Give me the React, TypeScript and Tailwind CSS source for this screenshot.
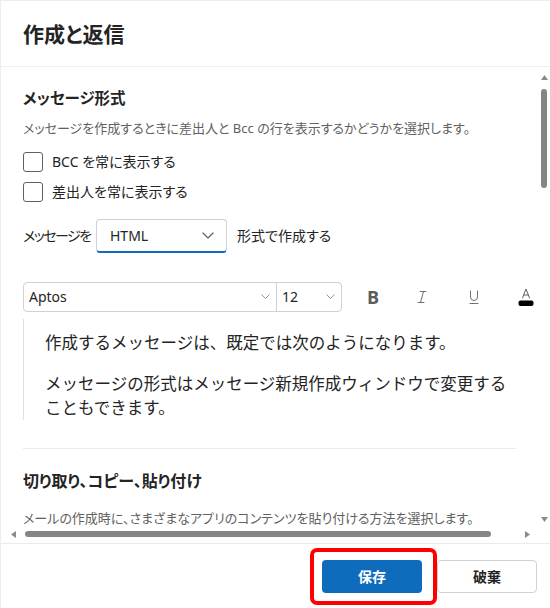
import React from "react";

const Tri = ({ dir }: { dir: "up" | "down" | "left" | "right" }) => {
  const pts: Record<string, string> = {
    up: "0,5 3.5,0 7,5",
    down: "0,0 3.5,5 7,0",
    left: "5,0 0,3.5 5,7",
    right: "0,0 5,3.5 0,7",
  };
  const vert = dir === "up" || dir === "down";
  return (
    <svg width={vert ? 7 : 5} height={vert ? 5 : 7} viewBox={vert ? "0 0 7 5" : "0 0 5 7"}>
      <polygon points={pts[dir]} fill="#8a8a8a" />
    </svg>
  );
};

const Chevron = ({ size = 10, color = "#707070" }: { size?: number; color?: string }) => (
  <svg width={size} height={size * 0.6} viewBox="0 0 10 6" fill="none">
    <path d="M0.8 0.8 L5 5 L9.2 0.8" stroke={color} strokeWidth="1" strokeLinecap="round" strokeLinejoin="round" />
  </svg>
);

const Checkbox = ({ label }: { label: string }) => (
  <div className="h-[30px] flex items-center">
    <div className="w-[20px] h-[20px] rounded-[3px] border border-[#616161] bg-white" />
    <span className="ml-[9px] text-[14px] leading-[20px] text-[#242424]">{label}</span>
  </div>
);

export default function App() {
  return (
    <div className="w-[550px] h-[608px] bg-white flex flex-col text-[#242424] font-['Noto_Sans','Noto_Sans_CJK_JP',sans-serif] [font-feature-settings:'palt'] border-l border-t border-[#ededed] overflow-hidden">
      {/* Header */}
      <div className="h-[66px] shrink-0 flex items-center px-[22px] border-b border-[#efefef]">
        <h1 className="text-[21px] leading-[28px] font-semibold">作成と返信</h1>
      </div>

      {/* Middle */}
      <div className="flex-1 min-h-0 flex flex-row">
        <div className="flex-1 min-w-0 flex flex-col">
          <div className="flex-1 min-h-0 overflow-hidden px-[22px] pt-[19px]">
            <h2 className="text-[15.5px] leading-[24px] font-semibold">メッセージ形式</h2>
            <p className="mt-[8px] text-[13px] leading-[20px] text-[#616161] whitespace-nowrap">
              メッセージを作成するときに差出人と Bcc の行を表示するかどうかを選択します。
            </p>
            <div className="mt-[9px] flex flex-col">
              <Checkbox label="BCC を常に表示する" />
              <Checkbox label="差出人を常に表示する" />
            </div>
            <div className="mt-[12px] flex items-center h-[34px]">
              <span className="text-[14px] leading-[20px] w-[73px] shrink-0 whitespace-nowrap tracking-[-1.5px]">メッセージを</span>
              <div className="w-[131px] h-[34px] shrink-0 rounded-[4px] border border-[#d1d1d1] border-b-[2px] border-b-[#0f6cbd] flex items-center justify-between pl-[13px] pr-[12px]">
                <span className="text-[14px] leading-[20px]">HTML</span>
                <Chevron size={12} color="#616161" />
              </div>
              <span className="ml-[10px] text-[14px] leading-[20px] whitespace-nowrap">形式で作成する</span>
            </div>

            {/* Toolbar */}
            <div className="mt-[29px] flex items-center h-[30px]">
              <div className="flex h-[30px] rounded-[4px] border border-[#d1d1d1]">
                <div className="w-[253px] flex items-center justify-between pl-[5px] pr-[6px] border-r border-[#d1d1d1]">
                  <span className="text-[14px] leading-[20px]">Aptos</span>
                  <Chevron size={9} color="#8a8a8a" />
                </div>
                <div className="w-[64px] flex items-center justify-between pl-[5px] pr-[6px]">
                  <span className="text-[14px] leading-[20px]">12</span>
                  <Chevron size={9} color="#8a8a8a" />
                </div>
              </div>
              <div className="ml-[16px] flex items-center">
                <div className="w-[30px] flex justify-center">
                  <span className="text-[18px] leading-[20px] font-bold text-[#5c5c5c] font-['Open_Sans',sans-serif]">B</span>
                </div>
                <div className="w-[30px] ml-[19px] flex justify-center">
                  <svg width="16" height="16" viewBox="0 0 16 16" fill="none">
                    <path d="M6 2.5 H12 M4 13.5 H10 M9.5 2.5 L6.5 13.5" stroke="#707070" strokeWidth="1" strokeLinecap="round" />
                  </svg>
                </div>
                <div className="w-[30px] ml-[22px] flex justify-center">
                  <svg width="16" height="16" viewBox="0 0 16 16" fill="none">
                    <path d="M4.5 2 V8 A3.5 3.5 0 0 0 11.5 8 V2 M4 14.5 H12" stroke="#707070" strokeWidth="1" strokeLinecap="round" />
                  </svg>
                </div>
                <div className="w-[30px] ml-[22px] flex justify-center">
                  <svg width="18" height="20" viewBox="0 0 18 20" fill="none">
                    <path d="M5.5 11 L9 2 L12.5 11 M6.7 8 H11.3" stroke="#616161" strokeWidth="1" strokeLinecap="round" strokeLinejoin="round" />
                    <rect x="1.5" y="13.5" width="15" height="5.5" rx="2" fill="#000" />
                  </svg>
                </div>
              </div>
            </div>

            {/* Preview */}
            <div className="mt-[7px] border-l border-[#e0e0e0] pl-[21px] pt-[12px] text-[16.5px] leading-[24px] [font-feature-settings:normal]">
              <p className="whitespace-nowrap">作成するメッセージは、既定では次のようになります。</p>
              <p className="mt-[17px] whitespace-nowrap">
                メッセージの形式はメッセージ新規作成ウィンドウで変更する
                <br />
                こともできます。
              </p>
            </div>

            <div className="mt-[28px] h-px bg-[#ebebeb]" />

            <h2 className="mt-[20px] text-[16px] leading-[24px] font-semibold">切り取り、コピー、貼り付け</h2>
            <p className="mt-[15px] text-[13px] leading-[20px] text-[#616161] whitespace-nowrap">
              メールの作成時に、さまざまなアプリのコンテンツを貼り付ける方法を選択します。
            </p>
          </div>

          {/* Horizontal scrollbar */}
          <div className="h-[16px] shrink-0 flex items-start pt-[4px]">
            <div className="w-[24px] h-[6px] flex items-center justify-center">
              <Tri dir="left" />
            </div>
            <div className="w-[466px] h-[6px] rounded-full bg-[#858585]" />
            <div className="w-[39px] h-[6px] flex items-center justify-end">
              <Tri dir="right" />
            </div>
          </div>
        </div>

        {/* Vertical scrollbar */}
        <div className="w-[12px] shrink-0 flex flex-col items-center pt-[8px] pb-[21px]">
          <Tri dir="up" />
          <div className="mt-[9px] w-[6px] h-[99px] rounded-full bg-[#858585]" />
          <div className="flex-1" />
          <Tri dir="down" />
        </div>
      </div>

      {/* Footer */}
      <div className="h-[65px] shrink-0 border-t border-[#ebebeb] flex items-center justify-end pr-[13px] gap-[15px] relative">
        <button className="w-[100px] h-[33px] rounded-[4px] bg-[#0f6cbd] text-white text-[14px] font-semibold">
          保存
        </button>
        <button className="w-[100px] h-[33px] rounded-[4px] border border-[#d1d1d1] bg-white text-[#242424] text-[14px] font-semibold">
          破棄
        </button>
        <div className="absolute left-[309px] top-[4px] w-[127px] h-[57px] rounded-[7px] border-[4px] border-[#ff0000] pointer-events-none" />
      </div>
    </div>
  );
}
